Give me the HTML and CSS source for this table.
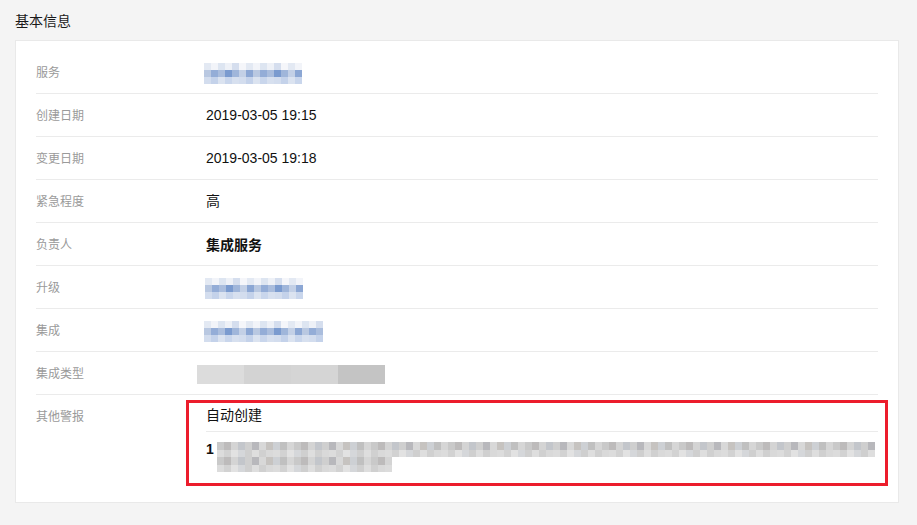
FILE: index.html
```html
<!DOCTYPE html>
<html lang="zh">
<head>
<meta charset="utf-8">
<title>基本信息</title>
<link rel="stylesheet" href="styles.css">
</head>
<body>
<div class="page">
  <h2 class="title">基本信息</h2>
  <div class="card">
    <div class="row">
      <div class="label">服务</div>
      <div class="value"><span class="mosaic blue w-svc"></span></div>
    </div>
    <div class="row">
      <div class="label">创建日期</div>
      <div class="value">2019-03-05 19:15</div>
    </div>
    <div class="row">
      <div class="label">变更日期</div>
      <div class="value">2019-03-05 19:18</div>
    </div>
    <div class="row">
      <div class="label">紧急程度</div>
      <div class="value">高</div>
    </div>
    <div class="row">
      <div class="label">负责人</div>
      <div class="value strong">集成服务</div>
    </div>
    <div class="row">
      <div class="label">升级</div>
      <div class="value"><span class="mosaic blue w-up"></span></div>
    </div>
    <div class="row">
      <div class="label">集成</div>
      <div class="value"><span class="mosaic blue w-int"></span></div>
    </div>
    <div class="row">
      <div class="label">集成类型</div>
      <div class="value"><span class="mosaic type"></span></div>
    </div>
    <div class="row last">
      <div class="label">其他警报</div>
      <div class="value alerts">
        <div class="sub">自动创建</div>
        <div class="sub item">
          <span class="num">1</span>
          <div class="lines">
            <span class="mosaic grey line1"></span>
            <span class="mosaic grey line2"></span>
          </div>
        </div>
        <div class="highlight"></div>
      </div>
    </div>
  </div>
</div>
</body>
</html>
```

FILE: styles.css
```css
* { box-sizing: border-box; }

body {
  margin: 0;
  background: #f4f4f4;
  font-family: "Liberation Sans", "Noto Sans CJK SC", sans-serif;
  color: #111;
}

.page {
  padding: 10px 18px 0 15px;
}

.title {
  margin: 0 0 10px;
  font-size: 14px;
  font-weight: normal;
  line-height: 20px;
  color: #1a1a1a;
  font-family: "Noto Sans CJK SC", sans-serif;
}

.card {
  background: #fff;
  border: 1px solid #e9e9e9;
  padding: 10px 20px 19px;
}

.row {
  display: grid;
  grid-template-columns: 170px 1fr;
  border-bottom: 1px solid #ebebeb;
  padding: 11px 0;
}

.row.last {
  border-bottom: none;
  padding-top: 0;
}

.label {
  font-size: 12px;
  line-height: 20px;
  color: #9a9a9a;
  font-family: "Noto Sans CJK SC", sans-serif;
}

.row.last .label {
  padding-top: 11px;
}

.value {
  display: flex;
  align-items: flex-start;
  height: 20px;
  font-size: 14px;
  line-height: 20px;
  color: #111;
}

.value.strong {
  font-weight: bold;
  font-family: "Noto Sans CJK SC", sans-serif;
}

.mosaic {
  display: block;
  flex: none;
}

.blue {
  height: 21px;
  background:
    repeating-linear-gradient(90deg, #e3e9f3 0 7px, #f2f4f9 7px 14px, #dde5f1 14px 21px, #eef1f7 21px 28px, #d5deee 28px 35px, #f5f6fa 35px 42px) 0 0 / 100% 7px no-repeat,
    repeating-linear-gradient(90deg, #b9c8e1 0 7px, #94add7 7px 14px, #aabddd 14px 21px, #7b9bcf 21px 28px, #a0b6da 28px 35px, #c3d0e6 35px 42px, #8ca7d4 42px 49px) 0 7px / 100% 7px no-repeat,
    repeating-linear-gradient(90deg, #d3ddee 0 7px, #c4d2ea 7px 14px, #dbe3f0 14px 21px, #c9d6ec 21px 28px, #d7e0ef 28px 35px) 0 14px / 100% 7px no-repeat;
}

.w-svc { width: 98px; margin-left: -2px; margin-top: 1px; }
.w-up { width: 98px; margin-left: -1px; margin-top: 1px; }
.w-int { width: 119px; margin-left: -2px; margin-top: 1px; }

.type {
  width: 188px;
  height: 19px;
  margin-left: -9px;
  margin-top: 2px;
  background: linear-gradient(90deg, #dcdcdc 0 47px, #d3d3d3 47px 94px, #d5d5d5 94px 141px, #c4c4c4 141px 188px);
}

.alerts {
  position: relative;
  display: block;
  height: auto;
}

.sub {
  padding: 9px 0 7px;
  border-bottom: 1px solid #ebebeb;
  font-family: "Noto Sans CJK SC", sans-serif;
}

.sub.item {
  display: flex;
  align-items: flex-start;
  border-bottom: none;
  padding: 10px 0 0;
}

.num {
  width: 11px;
  flex: none;
  font-weight: bold;
  font-size: 14px;
  line-height: 14px;
  font-family: "Liberation Sans", sans-serif;
}

.lines {
  display: flex;
  flex-direction: column;
}

.grey {
  height: 15px;
  background:
    repeating-linear-gradient(90deg, #c9c9c9 0 7px, #bdbbbb 7px 14px, #d4d4d4 14px 21px, #c3c6cb 21px 28px, #cfcfcf 28px 35px, #b8b8bc 35px 42px, #d8d8d8 42px 49px, #c6c3c0 49px 56px, #cdd0d4 56px 63px, #c0c0c0 63px 70px, #d6d6d6 70px 77px) 0 0 / 100% 8px no-repeat,
    repeating-linear-gradient(90deg, #dcdcdc 0 7px, #d2d2d2 7px 14px, #e2e2e2 14px 21px, #d5d7da 21px 28px, #cfcfcf 28px 35px, #dedede 35px 42px, #d0d0d0 42px 49px, #d9d9d9 49px 56px) 0 8px / 100% 7px no-repeat;
}

.line1 { width: 658px; }
.line2 { width: 175px; }

.highlight {
  position: absolute;
  left: -20px;
  top: 5px;
  width: 702px;
  height: 86px;
  border: 3px solid #ec1d2c;
  pointer-events: none;
}
```
